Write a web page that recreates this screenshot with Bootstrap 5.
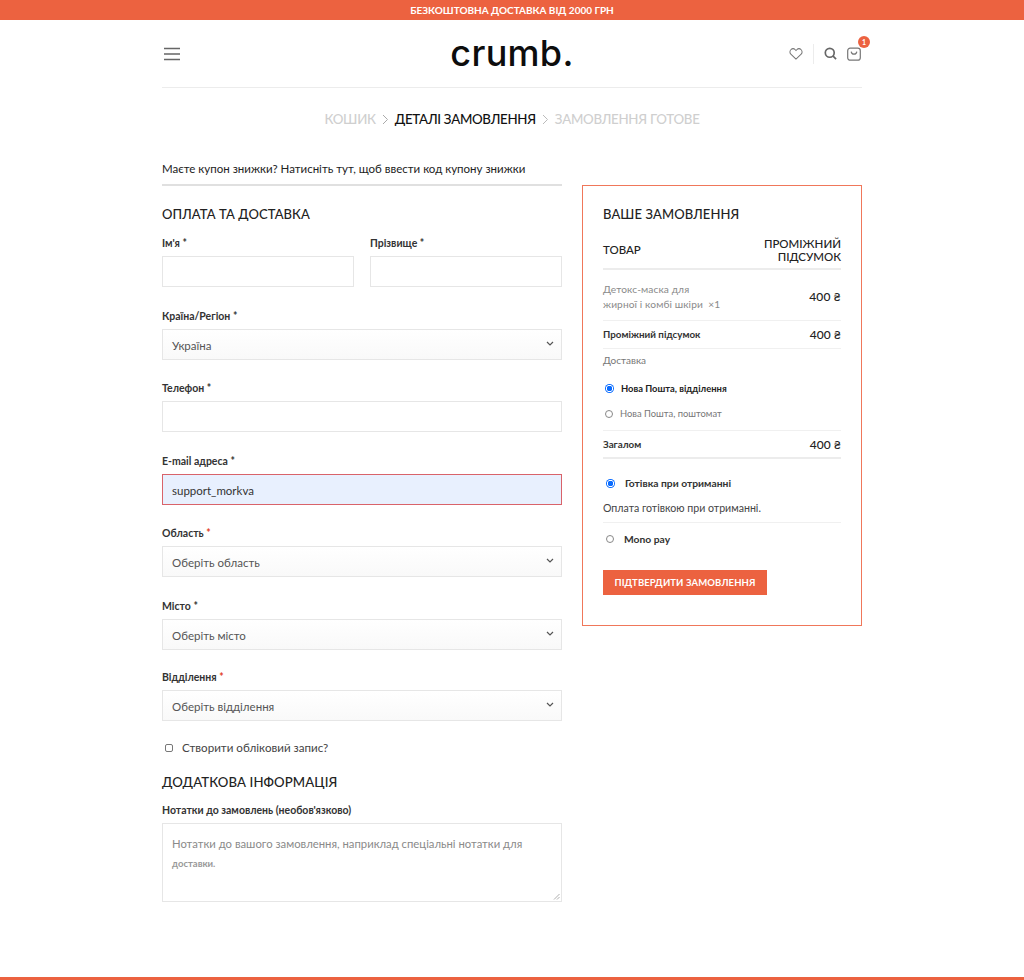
<!DOCTYPE html>
<html lang="uk">
<head>
<meta charset="utf-8">
<title>crumb.</title>
<link rel="stylesheet" href="https://cdn.jsdelivr.net/npm/bootstrap@5.3.0/dist/css/bootstrap.min.css">
<style>
html,body{height:980px;overflow:hidden}
body{font-family:Lato,"Open Sans","Noto Sans",sans-serif;color:#333;background:#fff;font-size:13px;position:relative}
.topline{height:20px;line-height:21px;background:#ec6240;color:#fff;font-size:10px;font-weight:700;text-align:center}
.wrapbox{width:700px;margin:0 auto}
.headrow{height:68px;border-bottom:1px solid #ececec}
.logotxt{font-family:Inter,Lato,sans-serif;font-size:36px;line-height:40px;font-weight:500;color:#0d0d0d;letter-spacing:.3px;margin-top:-2px}
.headside{width:120px}
.headicons{gap:10px;padding-right:1px}
.burger{margin-left:1px}
.vsep{width:1px;height:20px;background:#ececec}
.cartwrap{position:relative;line-height:0}
.cartcount{position:absolute;top:-11px;right:-9px;width:12px;height:12px;border-radius:50%;background:#ec6240;color:#fff;font-size:7px;font-weight:700;line-height:12px;text-align:center}
.crumbs{height:61px;padding-top:21px;font-size:13.3px;line-height:20px;font-weight:500;color:#cfcfcf;gap:6px;letter-spacing:-.3px}
.crumbs b{font-weight:500;color:#111}
.columns{gap:20px}
.leftcol{width:400px}
.rightcol{width:280px;margin-top:36px;height:441px;border:1px solid #f0775a;padding:18px 20px 0}
.coupon{height:37px;border-bottom:2px solid #e0e0e0;font-size:11.5px;line-height:20px;padding-top:10px;color:#222;white-space:nowrap}
.secttl{font-size:13px;font-weight:500;color:#222;line-height:20px;margin:0;letter-spacing:.1px}
.billttl{margin:18px 0 9px}
.extrattl{margin:14px 0 8px;font-size:13.2px}
.lbl{display:block;font-size:10.5px;font-weight:700;line-height:20px;margin-bottom:3px;color:#333}
.lbl em{font-style:normal;color:#333}
.lbl em.redstar{color:#e2401c}
.fieldgap{margin-bottom:18.5px}
.fieldgap.tight{margin-bottom:17.5px}
.inbox{display:block;width:100%;height:31px;border:1px solid #e6e6e6;border-radius:0;padding:1px 9px 0;font-size:11.5px;color:#555;background:#fff;line-height:29px;outline:0;position:relative;white-space:nowrap}
.inbox.autofill{background:#e8f0fe;border-color:#d9636a;color:#333}
.selbox{background:linear-gradient(#fff,#f9f9f9)}
.selbox svg{position:absolute;right:7px;top:11px}
.notes{height:79px;color:#8a8a8a;line-height:20px;padding-top:10px;font-size:11.3px}
.notes span{display:block}
.notes span+span{font-size:9.5px;font-weight:700;color:#999}
.notes svg{position:absolute;right:1px;bottom:1px}
.chkline{font-size:11.6px;line-height:20px;color:#444;gap:9px;margin-left:3px;margin-top:17px}
.chkbx{width:8px;height:8px;border:1px solid #777;border-radius:2px;background:#fff}
.thead{margin-top:14px;padding-bottom:5px;border-bottom:2px solid #ececec;font-size:11.5px;font-weight:500;color:#222;line-height:12.5px}
.rowline{border-bottom:1px solid #f0f0f0}
.prodrow{height:51px;padding-top:3px;color:#8a8a8a;font-size:10.2px;line-height:15px;letter-spacing:.1px}
.prc{font-size:12px;font-weight:500;color:#222}
.subrow{height:28px;font-size:9.8px;font-weight:700;color:#333}
.totalrow{height:28px;padding-top:1px;font-size:9.8px;font-weight:700;color:#333;border-bottom:2px solid #ececec}
.deliv{font-size:10px;color:#777;line-height:15px;padding-top:4px;height:27px}
.radrow{font-size:9.4px;line-height:14px;height:25px;gap:7px;padding-left:2px}
.radlast{height:30px;padding-bottom:4px;color:#777}
.radfirst{color:#222;font-weight:700}
.rad{width:8px;height:8px;border-radius:50%;border:1px solid #888;background:#fff;flex:none}
.rad.on{width:9px;height:9px;border:0;background:radial-gradient(circle,#0a6cff 0 2.6px,#fff 3px 3.4px,#0a6cff 3.8px)}
.payrow{font-size:10.3px;font-weight:700;color:#333;line-height:16px;gap:10px;padding-left:3px}
.payfirst{margin-top:16px}
.payline{font-size:10.6px;color:#444;line-height:16px;margin-top:9px;padding-bottom:6px}
.paylast{margin-top:8px}
.ordbtn{background:#ec6240;color:#fff;font-size:9.5px;font-weight:700;height:25px;width:164px;line-height:25px;padding:0;border:0;border-radius:0;letter-spacing:.1px;display:block;text-align:center;margin-top:23px}
.ordbtn:hover{background:#ec6240;color:#fff}
.bottomline{position:absolute;left:0;right:0;bottom:0;height:3px;background:#ec6240}
</style>
</head>
<body>
<div class="topline">БЕЗКОШТОВНА ДОСТАВКА ВІД 2000 ГРН</div>
<div class="wrapbox">
  <header class="headrow d-flex align-items-center justify-content-between">
    <div class="headside">
      <svg width="18" height="14" viewBox="0 0 18 14" fill="none" stroke="#666" stroke-width="1.6" class="d-block burger"><path d="M1 1.5h16M1 7h16M1 12.5h16"/></svg>
    </div>
    <div class="logotxt">crumb.</div>
    <div class="headside d-flex align-items-center justify-content-end headicons">
      <svg width="14" height="12" viewBox="0 0 15 13" fill="none" stroke="#777" stroke-width="1.1"><path d="M7.5 12 1.9 6.6a3.3 3.3 0 0 1 0-4.7 3.4 3.4 0 0 1 4.8 0l.8.8.8-.8a3.4 3.4 0 0 1 4.8 0 3.3 3.3 0 0 1 0 4.7z"/></svg>
      <span class="vsep"></span>
      <svg width="13" height="13" viewBox="0 0 14 14" fill="none" stroke="#666" stroke-width="1.8"><circle cx="6.2" cy="6.2" r="4.8"/><path d="m9.6 9.6 3.4 3.4"/></svg>
      <span class="cartwrap">
        <svg width="14" height="14" viewBox="0 0 14 14" fill="none" stroke="#777" stroke-width="1.2"><rect x=".7" y="1.2" width="12.6" height="12" rx="2.5"/><path d="M4.2 4.6c.4 3.4 5.2 3.4 5.6 0"/></svg>
        <span class="cartcount">1</span>
      </span>
    </div>
  </header>

  <div class="crumbs d-flex justify-content-center">
    <span>КОШИК</span>
    <svg width="7" height="20" viewBox="0 0 7 20" fill="none" stroke="#aaa" stroke-width="1"><path d="m1 6 4.5 4.5L1 15"/></svg>
    <b>ДЕТАЛІ ЗАМОВЛЕННЯ</b>
    <svg width="7" height="20" viewBox="0 0 7 20" fill="none" stroke="#bbb" stroke-width="1"><path d="m1 6 4.5 4.5L1 15"/></svg>
    <span>ЗАМОВЛЕННЯ ГОТОВЕ</span>
  </div>

  <div class="d-flex columns">
    <main class="leftcol">
      <div class="coupon">Маєте купон знижки? Натисніть тут, щоб ввести код купону знижки</div>
      <h3 class="secttl billttl">ОПЛАТА ТА ДОСТАВКА</h3>
      <div class="row gx-3 fieldgap">
        <div class="col-6"><label class="lbl">Ім'я <em>*</em></label><div class="inbox"></div></div>
        <div class="col-6"><label class="lbl">Прізвище <em>*</em></label><div class="inbox"></div></div>
      </div>
      <div class="fieldgap"><label class="lbl">Країна/Регіон <em>*</em></label>
        <div class="inbox selbox">Україна<svg width="8" height="6" viewBox="0 0 8 6" fill="none" stroke="#555" stroke-width="1.2"><path d="m1 1 3 3 3-3"/></svg></div></div>
      <div class="fieldgap"><label class="lbl">Телефон <em>*</em></label><div class="inbox"></div></div>
      <div class="fieldgap"><label class="lbl">E-mail адреса <em>*</em></label><div class="inbox autofill">support_morkva</div></div>
      <div class="fieldgap"><label class="lbl">Область <em class="redstar">*</em></label>
        <div class="inbox selbox">Оберіть область<svg width="8" height="6" viewBox="0 0 8 6" fill="none" stroke="#555" stroke-width="1.2"><path d="m1 1 3 3 3-3"/></svg></div></div>
      <div class="fieldgap tight"><label class="lbl">Місто <em>*</em></label>
        <div class="inbox selbox">Оберіть місто<svg width="8" height="6" viewBox="0 0 8 6" fill="none" stroke="#555" stroke-width="1.2"><path d="m1 1 3 3 3-3"/></svg></div></div>
      <div><label class="lbl">Відділення <em class="redstar">*</em></label>
        <div class="inbox selbox">Оберіть відділення<svg width="8" height="6" viewBox="0 0 8 6" fill="none" stroke="#555" stroke-width="1.2"><path d="m1 1 3 3 3-3"/></svg></div></div>
      <div class="chkline d-flex align-items-center"><span class="chkbx"></span>Створити обліковий запис?</div>
      <h3 class="secttl extrattl">ДОДАТКОВА ІНФОРМАЦІЯ</h3>
      <label class="lbl">Нотатки до замовлень (необов'язково)</label>
      <div class="inbox notes"><span>Нотатки до вашого замовлення, наприклад спеціальні нотатки для</span><span>доставки.</span>
        <svg width="7" height="7" viewBox="0 0 7 7" fill="none" stroke="#999" stroke-width=".8"><path d="M6.5 1 1 6.5M6.5 4 4 6.5"/></svg></div>
    </main>

    <aside class="rightcol">
      <h3 class="secttl">ВАШЕ ЗАМОВЛЕННЯ</h3>
      <div class="thead d-flex justify-content-between align-items-center"><span>ТОВАР</span><span class="text-end">ПРОМІЖНИЙ<br>ПІДСУМОК</span></div>
      <div class="prodrow rowline d-flex justify-content-between align-items-center"><span>Детокс-маска для<br>жирної і комбі шкіри &nbsp;×1</span><span class="prc">400 ₴</span></div>
      <div class="subrow rowline d-flex justify-content-between align-items-center"><span>Проміжний підсумок</span><span class="prc">400 ₴</span></div>
      <div class="deliv">Доставка</div>
      <div class="radrow radfirst d-flex align-items-center"><span class="rad on"></span>Нова Пошта, відділення</div>
      <div class="radrow radlast rowline d-flex align-items-center"><span class="rad"></span>Нова Пошта, поштомат</div>
      <div class="totalrow d-flex justify-content-between align-items-center"><span>Загалом</span><span class="prc">400 ₴</span></div>
      <div class="payrow payfirst d-flex align-items-center"><span class="rad on"></span>Готівка при отриманні</div>
      <div class="payline rowline">Оплата готівкою при отриманні.</div>
      <div class="payrow paylast d-flex align-items-center"><span class="rad"></span>Mono pay</div>
      <a class="btn ordbtn" href="#">ПІДТВЕРДИТИ ЗАМОВЛЕННЯ</a>
    </aside>
  </div>
</div>
<div class="bottomline"></div>
<script src="https://cdn.jsdelivr.net/npm/bootstrap@5.3.0/dist/js/bootstrap.bundle.min.js"></script>
</body>
</html>
